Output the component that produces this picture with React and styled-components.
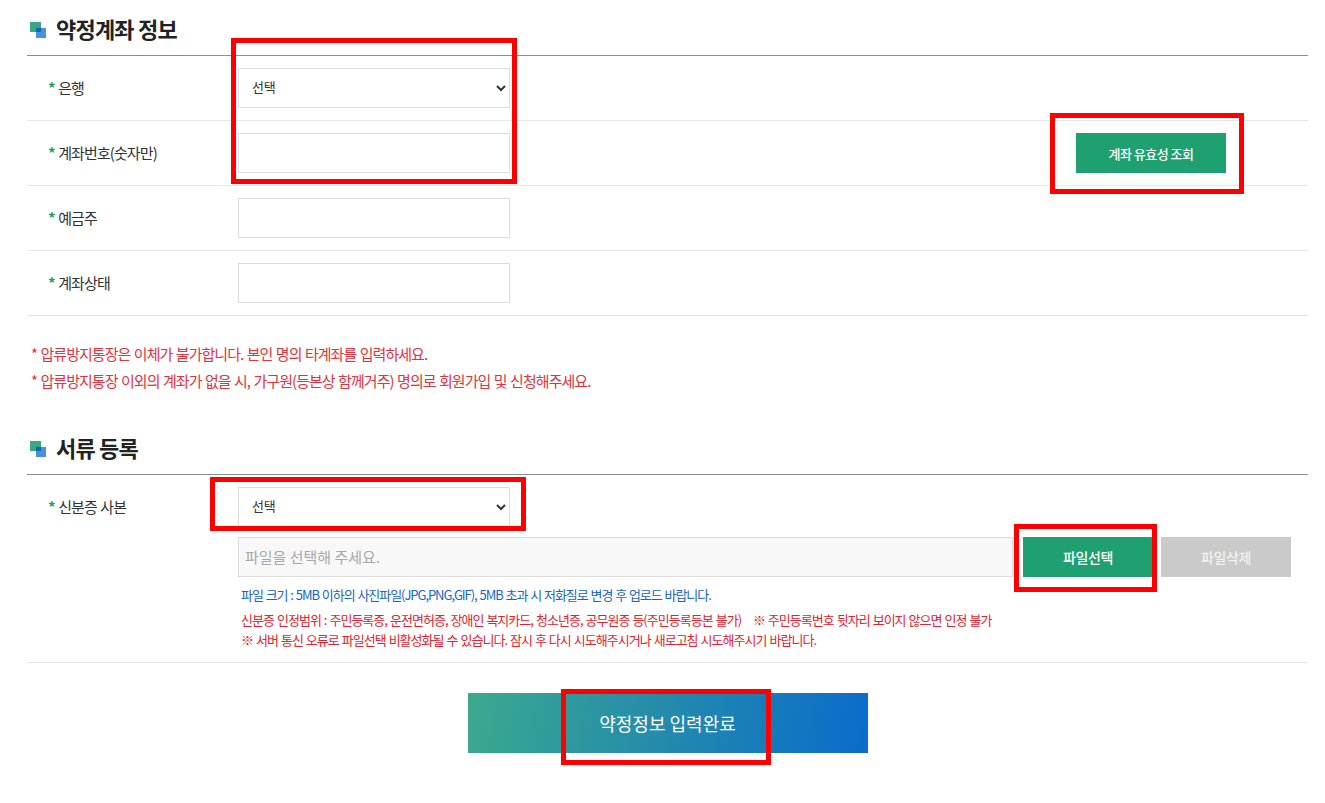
import React from "react";
import styled, { createGlobalStyle } from "styled-components";

const Global = createGlobalStyle`
  html, body { margin: 0; padding: 0; background: #fff; }
  body { font-family: "Noto Sans CJK KR", "Noto Sans", sans-serif; color: #333; }
  * { box-sizing: border-box; }
`;

const Page = styled.div`
  position: relative;
  width: 1325px;
  height: 803px;
  overflow: hidden;
  padding: 10px 17px 0 27px;
`;

const Section = styled.section`
  margin-top: ${(p) => p.$top || 0}px;
`;

const Heading = styled.h2`
  display: flex;
  align-items: center;
  gap: 9px;
  height: 46px;
  margin: 0;
  padding-left: 2px;
  border-bottom: 1px solid #8c8c8c;
  padding-bottom: 10px;
  font-size: 22px;
  font-weight: 700;
  letter-spacing: -0.8px;
  color: #222;

  svg {
    margin-top: 4px;
  }
`;

const Row = styled.div`
  display: flex;
  align-items: ${(p) => p.$align || "center"};
  height: ${(p) => (p.$auto ? "auto" : "65px")};
  border-bottom: 1px solid #e6e6e6;
  padding-top: ${(p) => (p.$auto ? "12px" : "0")};
  padding-bottom: ${(p) => (p.$auto ? "12px" : "0")};
`;

const Label = styled.label`
  flex: 0 0 211px;
  padding-left: 21px;
  font-size: 15px;
  letter-spacing: -0.9px;
  word-spacing: 1px;
  color: #333;
  line-height: 40px;
`;

const Star = styled.span`
  color: #1ba06d;
  font-weight: 700;
`;

const Select = styled.select`
  width: 272px;
  height: 40px;
  padding: 0 9px 3px;
  background: #fff;
  border: 1px solid #ddd;
  border-radius: 0;
  font-family: inherit;
  font-size: 13px;
  letter-spacing: -0.1px;
  color: #333;
`;

const Input = styled.input`
  width: 272px;
  height: 40px;
  border: 1px solid #ddd;
  background: #fff;
`;

const ActionButton = styled.button`
  width: ${(p) => p.$w || 130}px;
  height: 40px;
  border: 0;
  padding: 0;
  background: ${(p) => (p.$off ? "#cacaca" : "#1fa070")};
  color: ${(p) => (p.$off ? "#f1f1f1" : "#fff")};
  font-family: inherit;
  font-size: ${(p) => p.$fs || 14}px;
  font-weight: 500;
  letter-spacing: ${(p) => p.$ls ?? -0.4}px;
`;

const CheckButton = styled(ActionButton)`
  margin-left: auto;
  margin-right: 82px;
`;

const Notes = styled.div`
  padding: 24px 0 0 4px;
`;

const Note = styled.p`
  margin: 0;
  font-size: 15px;
  line-height: 27px;
  letter-spacing: -0.95px;
  word-spacing: 1px;
  color: #e8303a;
`;

const Field = styled.div`
  flex: 1;
`;

const FileRow = styled.div`
  display: flex;
  margin-top: 10px;
  margin-right: 17px;
`;

const FileName = styled.div`
  flex: 0 0 775px;
  height: 40px;
  padding-left: 6px;
  background: #f8f8f8;
  border: 1px solid #ddd;
  color: #a8a8a8;
  font-size: 15px;
  line-height: 38px;
  letter-spacing: 0;
`;

const FileButtons = styled.div`
  display: flex;
  gap: 8px;
  margin-left: 10px;
`;

const Hint = styled.p`
  margin: ${(p) => p.$top || 0}px 0 0 3px;
  font-size: 13px;
  line-height: 20px;
  letter-spacing: ${(p) => (p.$blue ? "-1.05px" : "-0.97px")};
  word-spacing: 1px;
  white-space: pre-wrap;
  color: ${(p) => (p.$blue ? "#1565c8" : "#e8202c")};
`;

const SubmitWrap = styled.div`
  display: flex;
  justify-content: center;
  margin-top: 30px;
`;

const Submit = styled.button`
  width: 400px;
  height: 60px;
  border: 0;
  background: linear-gradient(100deg, #3ca98e 0%, #0a6bcc 100%);
  color: #fff;
  font-family: inherit;
  font-size: 18px;
  font-weight: 400;
  letter-spacing: 0;
`;

const Highlight = styled.div`
  position: absolute;
  left: ${(p) => p.$x}px;
  top: ${(p) => p.$y}px;
  width: ${(p) => p.$w}px;
  height: ${(p) => p.$h}px;
  border: 5px solid #ff0000;
  pointer-events: none;
`;

const HeadingIcon = () => (
  <svg width="18" height="18" viewBox="0 0 18 18" aria-hidden="true">
    <rect x="1" y="1" width="11" height="10" fill="#3aa78c" />
    <rect x="7" y="7" width="10" height="10" fill="#4a90e2" />
    <rect x="7" y="7" width="5" height="4" fill="#0f6aa8" />
  </svg>
);

const Req = ({ children }) => (
  <Label>
    <Star>*</Star> {children}
  </Label>
);

export default function App() {
  return (
    <Page>
      <Global />
      <Section>
        <Heading>
          <HeadingIcon />
          약정계좌 정보
        </Heading>
        <Row>
          <Req>은행</Req>
          <Select defaultValue="">
            <option value="">선택</option>
          </Select>
        </Row>
        <Row>
          <Req>계좌번호(숫자만)</Req>
          <Input />
          <CheckButton $w={150} $fs={13} $ls={-0.5}>계좌 유효성 조회</CheckButton>
        </Row>
        <Row>
          <Req>예금주</Req>
          <Input />
        </Row>
        <Row>
          <Req>계좌상태</Req>
          <Input />
        </Row>
      </Section>
      <Notes>
        <Note>* 압류방지통장은 이체가 불가합니다. 본인 명의 타계좌를 입력하세요.</Note>
        <Note>* 압류방지통장 이외의 계좌가 없을 시, 가구원(등본상 함께거주) 명의로 회원가입 및 신청해주세요.</Note>
      </Notes>
      <Section $top={35}>
        <Heading>
          <HeadingIcon />
          서류 등록
        </Heading>
        <Row $auto $align="flex-start">
          <Req>신분증 사본</Req>
          <Field>
            <Select defaultValue="">
              <option value="">선택</option>
            </Select>
            <FileRow>
              <FileName>파일을 선택해 주세요.</FileName>
              <FileButtons>
                <ActionButton>파일선택</ActionButton>
                <ActionButton $off>파일삭제</ActionButton>
              </FileButtons>
            </FileRow>
            <Hint $blue $top={8}>파일 크기 : 5MB 이하의 사진파일(JPG,PNG,GIF), 5MB 초과 시 저화질로 변경 후 업로드 바랍니다.</Hint>
            <Hint $top={5}>신분증 인정범위 : 주민등록증, 운전면허증, 장애인 복지카드, 청소년증, 공무원증 등(주민등록등본 불가){"    "}※ 주민등록번호 뒷자리 보이지 않으면 인정 불가</Hint>
            <Hint>※ 서버 통신 오류로 파일선택 비활성화될 수 있습니다. 잠시 후 다시 시도해주시거나 새로고침 시도해주시기 바랍니다.</Hint>
          </Field>
        </Row>
      </Section>
      <SubmitWrap>
        <Submit>약정정보 입력완료</Submit>
      </SubmitWrap>
      <Highlight $x={231} $y={38} $w={286} $h={146} />
      <Highlight $x={1050} $y={113} $w={194} $h={81} />
      <Highlight $x={210} $y={477} $w={316} $h={54} />
      <Highlight $x={1014} $y={524} $w={143} $h={68} />
      <Highlight $x={561} $y={689} $w={210} $h={76} />
    </Page>
  );
}
